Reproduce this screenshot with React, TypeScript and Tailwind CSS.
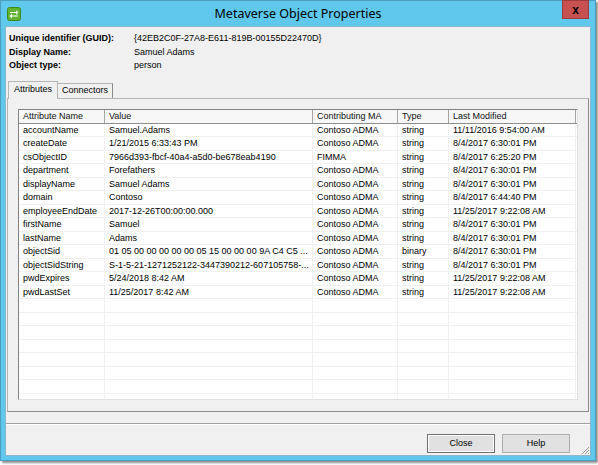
import * as React from 'react';

type Row = { name: string; value: string; ma: string; type: string; modified: string };

const ROWS: Row[] = [
  { name: 'accountName', value: 'Samuel.Adams', ma: 'Contoso ADMA', type: 'string', modified: '11/11/2016 9:54:00 AM' },
  { name: 'createDate', value: '1/21/2015 6:33:43 PM', ma: 'Contoso ADMA', type: 'string', modified: '8/4/2017 6:30:01 PM' },
  { name: 'csObjectID', value: '7966d393-fbcf-40a4-a5d0-be678eab4190', ma: 'FIMMA', type: 'string', modified: '8/4/2017 6:25:20 PM' },
  { name: 'department', value: 'Forefathers', ma: 'Contoso ADMA', type: 'string', modified: '8/4/2017 6:30:01 PM' },
  { name: 'displayName', value: 'Samuel Adams', ma: 'Contoso ADMA', type: 'string', modified: '8/4/2017 6:30:01 PM' },
  { name: 'domain', value: 'Contoso', ma: 'Contoso ADMA', type: 'string', modified: '8/4/2017 6:44:40 PM' },
  { name: 'employeeEndDate', value: '2017-12-26T00:00:00.000', ma: 'Contoso ADMA', type: 'string', modified: '11/25/2017 9:22:08 AM' },
  { name: 'firstName', value: 'Samuel', ma: 'Contoso ADMA', type: 'string', modified: '8/4/2017 6:30:01 PM' },
  { name: 'lastName', value: 'Adams', ma: 'Contoso ADMA', type: 'string', modified: '8/4/2017 6:30:01 PM' },
  { name: 'objectSid', value: '01 05 00 00 00 00 00 05 15 00 00 00 9A C4 C5 ...', ma: 'Contoso ADMA', type: 'binary', modified: '8/4/2017 6:30:01 PM' },
  { name: 'objectSidString', value: 'S-1-5-21-1271252122-3447390212-607105758-...', ma: 'Contoso ADMA', type: 'string', modified: '8/4/2017 6:30:01 PM' },
  { name: 'pwdExpires', value: '5/24/2018 8:42 AM', ma: 'Contoso ADMA', type: 'string', modified: '11/25/2017 9:22:08 AM' },
  { name: 'pwdLastSet', value: '11/25/2017 8:42 AM', ma: 'Contoso ADMA', type: 'string', modified: '11/25/2017 9:22:08 AM' },
];

const COLS = ['w-[86px]', 'w-[208px]', 'w-[85px]', 'w-[51px]', 'w-[127px]'];

const AppIcon = () => (
  <svg width="14" height="14" viewBox="0 0 14 14">
    <rect x="0.5" y="0.5" width="13" height="13" rx="2" fill="#62b332" stroke="#3f8a1f" />
    <path d="M3 5h6V3.2L11.5 5.5 9 7.8V6H3z" fill="#fff" />
    <path d="M11 8.5H5V6.8L2.5 9.1 5 11.4V9.6h6z" fill="#fff" />
  </svg>
);

const Cell = ({ children, w }: { children?: React.ReactNode; w: string }) => (
  <div className={`${w} shrink-0 h-full border-r border-[#f0f0f0] pl-[4px] pr-[2px] whitespace-nowrap overflow-hidden text-ellipsis leading-[13px]`}>
    {children}
  </div>
);

export default function App() {
  const empty = Array.from({ length: 8 });
  return (
    <div className="w-[598px] h-[465px] bg-white" style={{ fontFamily: '"Liberation Sans", Arial, sans-serif' }}>
      <div className="w-[596px] h-[461px] flex flex-col bg-[#5fc8ec] border border-[#4a9ec0] shadow-[2px_2px_2px_rgba(0,0,0,0.45)]">
        {/* title bar */}
        <div className="relative h-[25px] shrink-0 flex items-center pl-[6px]">
          <AppIcon />
          <div className="absolute inset-x-0 top-[5px] text-center text-[12.5px] leading-[16px] text-black" style={{ fontFamily: '"Noto Sans", "Open Sans", sans-serif' }}>
            Metaverse Object Properties
          </div>
          <div className="absolute right-[6px] -top-px w-[27px] h-[19px] bg-[#c75050] border border-[#9e3b3b] flex items-center justify-center text-[12px] font-bold text-black leading-none">
            x
          </div>
        </div>

        {/* client area */}
        <div className="mx-[4px] mb-[4px] flex-1 flex flex-col bg-[#f0f0f0] border border-[#8cb8cc] text-[9px] text-black">
          <div className="pl-[3px] pt-[5px] leading-[13.5px]">
            <div className="flex"><span className="w-[125px] font-bold">Unique identifier (GUID):</span><span>{'{42EB2C0F-27A8-E611-819B-00155D22470D}'}</span></div>
            <div className="flex"><span className="w-[125px] font-bold">Display Name:</span><span>Samuel Adams</span></div>
            <div className="flex"><span className="w-[125px] font-bold">Object type:</span><span>person</span></div>
          </div>

          {/* tabs */}
          <div className="flex items-end h-[17px] mt-[8px] pl-[2px]">
            <div className="relative z-10 h-[18px] px-[5px] -mb-px bg-[#f0f0f0] border border-b-0 border-[#b5b5b5] flex items-center">Attributes</div>
            <div className="h-[15px] px-[4px] border border-b-0 border-l-0 border-[#b5b5b5] border-r-[#8a8a8a] flex items-center">Connectors</div>
          </div>
          <div className="ml-[1px] mr-[1px] h-[314px] border border-[#b5b5b5] border-r-[#8a8a8a] border-b-[#8a8a8a] pt-[10px] pl-[10px] pr-[10px] pb-[11px]">
            <div className="h-full bg-white border border-[#828282] border-r-[#e0e0e0] border-b-[#e0e0e0] overflow-hidden">
              <div className="flex h-[14px] bg-[#f7f7f7] border-b border-[#8f8f8f]">
                {['Attribute Name', 'Value', 'Contributing MA', 'Type', 'Last Modified'].map((h, i) => (
                  <div key={h} className={`${COLS[i]} shrink-0 border-r border-[#a5a5a5] pl-[4px] leading-[13px] text-[#111]`}>{h}</div>
                ))}
              </div>
              {ROWS.map((r) => (
                <div key={r.name} className="flex h-[13.5px] border-b border-[#f0f0f0]">
                  <Cell w={COLS[0]}>{r.name}</Cell>
                  <Cell w={COLS[1]}>{r.value}</Cell>
                  <Cell w={COLS[2]}>{r.ma}</Cell>
                  <Cell w={COLS[3]}>{r.type}</Cell>
                  <Cell w={COLS[4]}>{r.modified}</Cell>
                </div>
              ))}
              {empty.map((_, i) => (
                <div key={i} className="flex h-[13.5px] border-b border-[#f0f0f0]">
                  {COLS.map((w, j) => <Cell key={j} w={w} />)}
                </div>
              ))}
            </div>
          </div>

          {/* footer */}
          <div className="mt-[11px] border-t border-[#a0a0a0] border-b border-b-white" />
          <div className="flex-1 relative flex justify-end items-start pt-[9px] pr-[20px] gap-[7px]">
            <button className="w-[68px] h-[19px] bg-[#e1e1e1] border border-[#707070] shadow-[inset_0_0_0_1px_#fff] leading-none">Close</button>
            <button className="w-[68px] h-[19px] bg-[#e1e1e1] border border-[#adadad] leading-none">Help</button>
            <svg className="absolute right-0 bottom-0" width="10" height="10" viewBox="0 0 10 10">
              <path d="M9 2L2 9M9 5L5 9M9 8L8 9" stroke="#9a9a9a" strokeWidth="1" />
            </svg>
          </div>
        </div>
      </div>
    </div>
  );
}
